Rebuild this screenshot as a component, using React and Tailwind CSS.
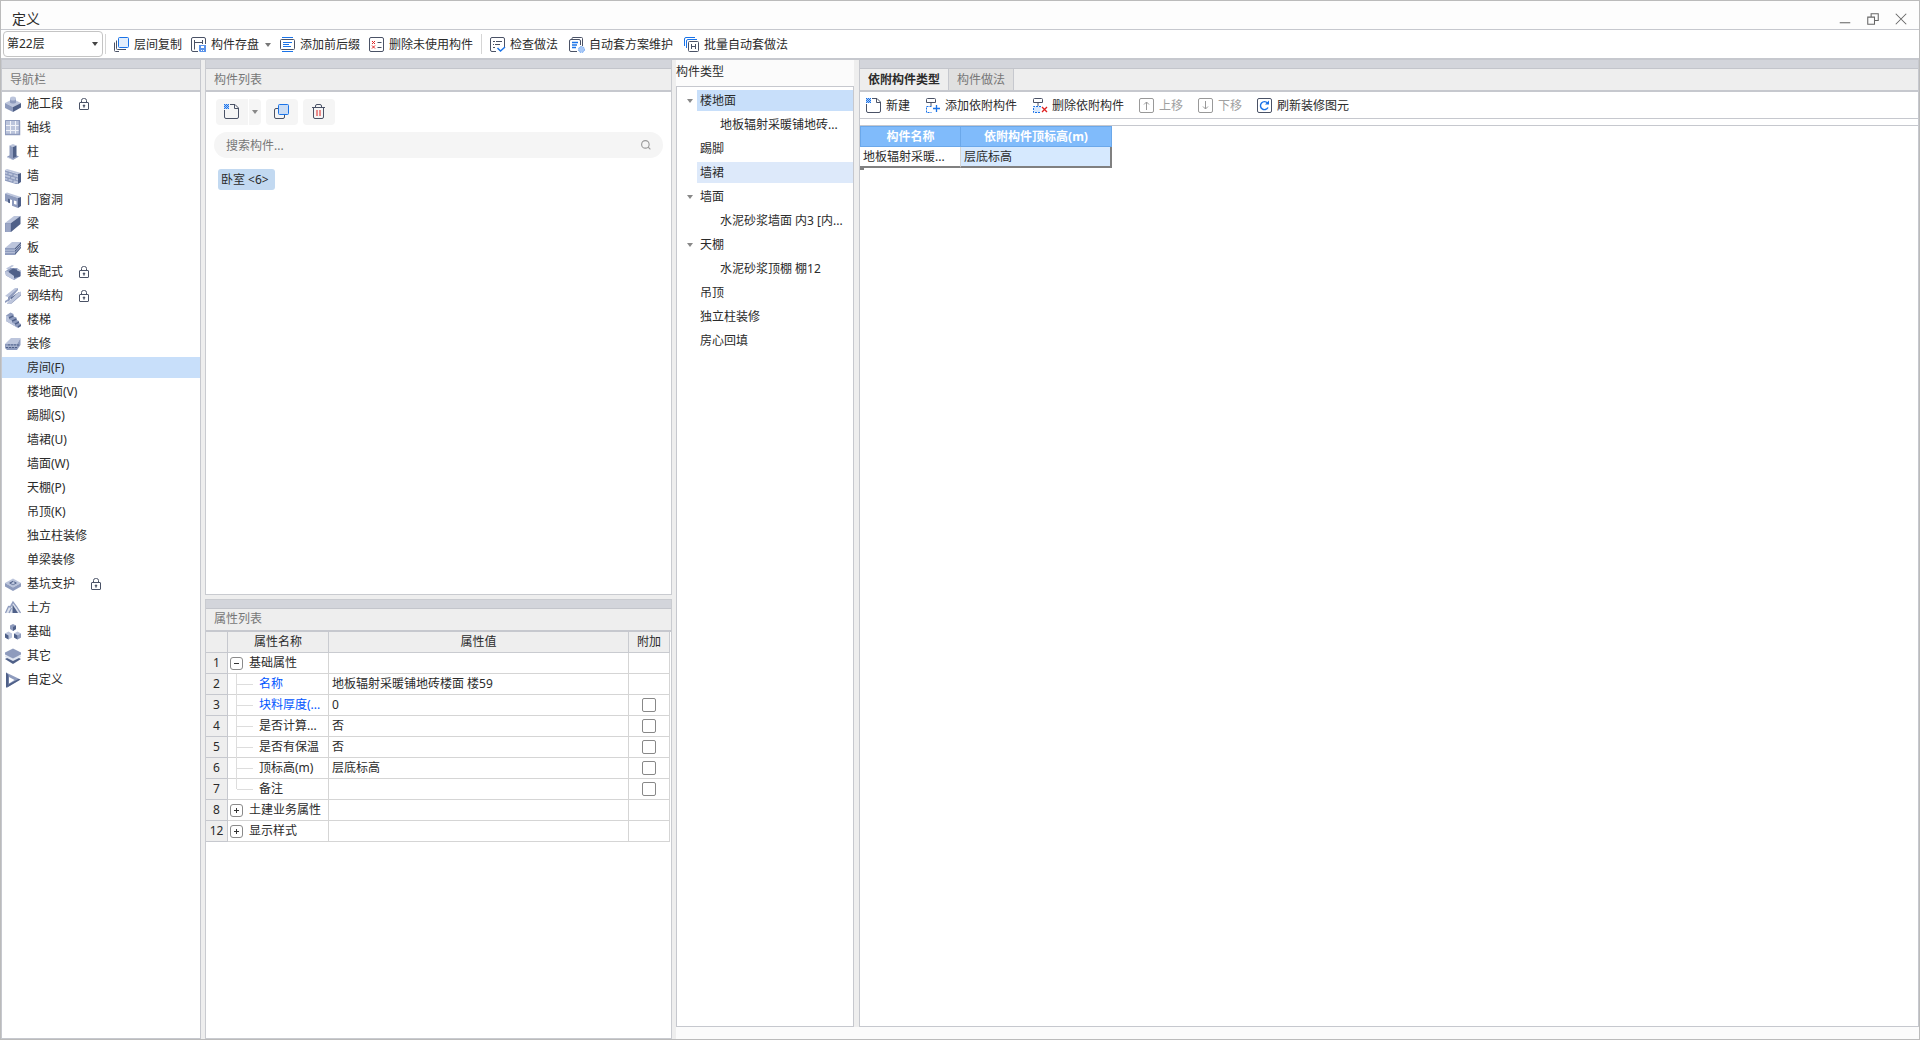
import { useState } from 'react';

// shades used by the 3D style icons
const L = '#bcc5dc';
const M = '#8e9bbd';
const D = '#4f6088';

const INK = '#4a5266';
const BLUE = '#1a73e8';
const RED = '#e02020';

function Icon({ children, className = 'size-4' }) {
  return (
    <svg viewBox="0 0 16 16" fill="none" className={`shrink-0 ${className}`} aria-hidden="true">
      {children}
    </svg>
  );
}

const navIcons = {
  stage: (
    <>
      <path d="M0 7 8 3l8 4-8 4z" fill={L} />
      <path d="M0 7 8 11v5L0 12z" fill={M} />
      <path d="M16 7 8 11v5l8-4.500z" fill={D} />
      <path d="M5 2.500v4c1 1.300 5 1.300 6 0v-4z" fill={M} />
      <ellipse cx="8" cy="2.500" rx="3" ry="2" fill={L} />
    </>
  ),
  grid: (
    <>
      <path d="M0 0h15v15H0z" fill={L} />
      <path d="M5.500 1v13M10.500 1v13M1 5.500h13M1 10.500h13" stroke="#f1f3f9" />
      <path d="M.5 15V.5H15" stroke={M} />
      <path d="M14.500 1v13.500H0" stroke={M} strokeWidth="1.500" />
    </>
  ),
  column: (
    <>
      <path d="M2 12.500 8 10l6 2.500L8 16z" fill={M} />
      <path d="M2 12.500 8 15.500V16l-6-2.500z" fill={L} />
      <path d="M4.500 1.500 8 0l3.500 1.500L8 3z" fill={L} />
      <path d="M4.500 1.500 8 3v11l-3.500-1.500z" fill={M} />
      <path d="M11.500 1.500 8 3v11l3.500-1.500z" fill={D} />
    </>
  ),
  wall: (
    <>
      <path d="M0 2 2 1l14 4-3 1z" fill={L} />
      <path d="M0 2l13 4v10L0 12z" fill={L} />
      <path d="M13 6l3-1v9l-3 2z" fill={D} />
      <path d="M0 3l13 4M0 6l13 4M0 9l13 4M0 12l13 4M3 4v3M8 5.500v3M5.500 8v3M10.500 9.500v3M3 10.500v2.500M8 12v3" stroke={M} strokeWidth="1.200" />
    </>
  ),
  opening: (
    <>
      <path d="M0 1.500 2 .5l14 4.500-3 1z" fill={L} />
      <path fillRule="evenodd" d="M0 1.500l13 4.500v10l-6-2.300V8L3 6.800V10L0 9zM9 8.500v3.500l2.500.8V9.300z" fill={M} />
      <path d="M3 6.500v4l2 .8V7.200z" fill={D} />
      <path d="M13 6l3-1v9l-3 2z" fill={D} />
    </>
  ),
  beam: (
    <>
      <path d="M0 7 9 0h6.500L6 7z" fill={L} />
      <path d="M0 7h6v9H0z" fill={M} />
      <path d="M2 7.500V16M4 7.500V16" stroke={L} strokeWidth=".6" />
      <path d="M6 7 15.500 0v8L6 16z" fill={D} />
    </>
  ),
  slab: (
    <>
      <path d="M0 8 7 2h9l-6 6z" fill={L} />
      <path d="M0 8h10v7H0z" fill={M} />
      <path d="M10 8l6-6v6l-6 7z" fill={D} />
      <path d="M0 10.200h10l6-6M0 12.600h10l6-6.500" stroke={L} strokeWidth=".9" />
    </>
  ),
  prefab: (
    <>
      <path d="M0 7.500 5 4h7l4 3v5l-7 4-8-4.500z" fill={M} />
      <path d="M4 7l4-2.500 7 2v6L9 14l-5-4z" fill={D} />
      <path d="M0 8l2-1 7 5v4l-8-4.500z" fill={L} />
      <path d="M1 4.500 7 1l2 .8L3 5.500z" fill={L} />
      <path d="M12 5l4 1.500V8l-4-1.500z" fill={L} />
    </>
  ),
  steel: (
    <>
      <path d="M0 8 10 0h3L3 9z" fill={L} />
      <path d="M3 9 13 0v2L8 8l-5 6z" fill={M} />
      <path d="M6 9.500 14 4v3l-8 7z" fill={D} />
      <path d="M2 15 13 4.500l3-1V6L5 16H2z" fill={L} />
      <path d="M5 16 16 6v1.500L6 16z" fill={M} />
      <path d="M0 13l5-3v2l-5 3z" fill={M} />
    </>
  ),
  stairs: (
    <>
      <path d="M1 3.500 5.500.5l3 1.500v2.500l3 1V8l2.500 1v2l2 1v2l-3 2L1 9z" fill={M} />
      <path d="M1 3.500l3 1.200v2.500l3 1.200v2.400l3 1.200v2l3 1.500V16L1 9z" fill={L} />
      <path d="M4 6l4.500-2.200M7 9.200 11.500 7M10 12.200l4-2M13 15l3-1.800" stroke={D} strokeWidth="1.500" />
    </>
  ),
  decorate: (
    <>
      <path d="M0 8 6 2h9.500L12 8z" fill={L} />
      <path d="M0 8h12v6H2l-2-2z" fill={M} />
      <path d="M12 8l3.500-6v7L12 14z" fill={M} />
      <path d="M3 9h11M1 11.500h12" stroke={D} strokeDasharray="2 1" />
      <path d="M1 10.200h11" stroke={L} strokeWidth=".8" />
    </>
  ),
  pit: (
    <>
      <path d="M0 7l8-4.500L16 7l-8 4.500z" fill={L} />
      <path d="M0 7l8 4.500V15L0 10.500z" fill={M} />
      <path d="M16 7l-8 4.500V15l8-4.500z" fill={M} />
      <path d="M4 7l4-2.300L12 7 8 9.200z" fill={D} />
      <path d="M6 7.200 9 5l.8 2.500L8 8.800z" fill={L} />
    </>
  ),
  earth: (
    <>
      <path d="M7.500 2 11 6l4 7H1l3-7z" fill={L} opacity=".5" />
      <path d="M.5 13 3.500 6.500l2 .5L8 2l3.500 4.500 4 6.500" stroke={M} strokeWidth="1.300" />
      <path d="M7.500 4.500l5.500 8.500H7.500z" fill={D} />
      <path d="M4 13l2.500-5" stroke={M} strokeWidth="1.300" />
    </>
  ),
  base: (
    <>
      <path d="M5 1.500 8 0l3 1.500V5L8 7 5 5z" fill={M} />
      <path d="M8 3l3-1.500V5L8 7z" fill={D} />
      <path d="M0 9.500l3.500-2L7 9.500v4l-3.500 2-3.500-2z" fill={L} />
      <path d="M0 9.500l3.500 2v4l-3.500-2z" fill={D} />
      <path d="M9 9.500l3.500-2 3.500 2v4l-3.500 2-3.500-2z" fill={L} />
      <path d="M12.500 11.500 16 9.500v4l-3.500 2z" fill={M} />
      <path d="M9 9.500l3.500 2v4l-3.500-2z" fill={D} />
    </>
  ),
  other: (
    <>
      <path d="M0 11l8-4 8 4-8 5z" fill={D} />
      <path d="M0 7.500h16V9l-8 4-8-4z" fill="#dfe5f1" />
      <path d="M0 4.500 8 .5l8 4v2L8 10.500 0 6.500z" fill={M} />
    </>
  ),
  custom: (
    <>
      <path d="M1 .5 15.500 7.500 2 15.500z" fill={M} />
      <path d="M4 5l5.500 3L4 11.500z" fill="#fff" />
      <path d="M1 .5 3.500 3v10L2 15.500H1z" fill={D} />
      <path d="M2 15.500 15.500 7.500l-2-.5L4 12z" fill={D} />
    </>
  ),
};

const navItems = [
  { name: '施工段', icon: 'stage', lock: true },
  { name: '轴线', icon: 'grid' },
  { name: '柱', icon: 'column' },
  { name: '墙', icon: 'wall' },
  { name: '门窗洞', icon: 'opening' },
  { name: '梁', icon: 'beam' },
  { name: '板', icon: 'slab' },
  { name: '装配式', icon: 'prefab', lock: true },
  { name: '钢结构', icon: 'steel', lock: true },
  { name: '楼梯', icon: 'stairs' },
  { name: '装修', icon: 'decorate' },
  { name: '房间(F)' },
  { name: '楼地面(V)' },
  { name: '踢脚(S)' },
  { name: '墙裙(U)' },
  { name: '墙面(W)' },
  { name: '天棚(P)' },
  { name: '吊顶(K)' },
  { name: '独立柱装修' },
  { name: '单梁装修' },
  { name: '基坑支护', icon: 'pit', lock: true },
  { name: '土方', icon: 'earth' },
  { name: '基础', icon: 'base' },
  { name: '其它', icon: 'other' },
  { name: '自定义', icon: 'custom' },
];

const typeTree = [
  { name: '楼地面', open: true },
  { name: '地板辐射采暖铺地砖...', child: true },
  { name: '踢脚' },
  { name: '墙裙', hover: true },
  { name: '墙面', open: true },
  { name: '水泥砂浆墙面 内3 [内...', child: true },
  { name: '天棚', open: true },
  { name: '水泥砂浆顶棚 棚12', child: true },
  { name: '吊顶' },
  { name: '独立柱装修' },
  { name: '房心回填' },
];

const props = [
  { no: 1, name: '基础属性', group: '-' },
  { no: 2, name: '名称', value: '地板辐射采暖铺地砖楼面 楼59', blue: true },
  { no: 3, name: '块料厚度(...', value: '0', blue: true, check: true },
  { no: 4, name: '是否计算...', value: '否', check: true },
  { no: 5, name: '是否有保温', value: '否', check: true },
  { no: 6, name: '顶标高(m)', value: '层底标高', check: true },
  { no: 7, name: '备注', value: '', check: true, last: true },
  { no: 8, name: '土建业务属性', group: '+' },
  { no: 12, name: '显示样式', group: '+' },
];

const toolIcons = {
  copyFloor: (
    <>
      <rect x="4.500" y=".5" width="10" height="10" rx="1" fill="#e3eefc" stroke={BLUE} />
      <path d="M2.500 3.500v8a1 1 0 0 0 1 1H12M.5 5.500v8a1 1 0 0 0 1 1H5" stroke={INK} />
    </>
  ),
  save: (
    <>
      <path d="M7 14.500H2A1.500 1.500 0 0 1 .5 13V2A1.500 1.500 0 0 1 2 .5h11A1.500 1.500 0 0 1 14.500 2v5" stroke={INK} />
      <path d="M3.500 3v9.500M3.500 5.500h8M11.500 3v4" stroke={INK} />
      <path d="M8 8h7v7H9l-1-1z" fill="#5b93ea" />
      <path d="M10 9h3v2h-3zM10 13h1v1h-1zM12 13h1v1h-1z" fill="#fff" />
    </>
  ),
  prefix: (
    <>
      <path d="M2 .5h11M2 14.500h11" stroke={BLUE} />
      <rect x=".5" y="2.500" width="14" height="10" rx="1" stroke={INK} />
      <path d="M3 5.500h9M3 7.500h6M3 9.500h8" stroke={BLUE} />
    </>
  ),
  removeUnused: (
    <>
      <rect x=".5" y=".5" width="14" height="14" rx="1.500" stroke={INK} />
      <path d="M3 4l3 3M6 4 3 7M3 8.500l3 3M6 8.500l-3 3" stroke={RED} />
      <path d="M8.500 5.500h4M8.500 10.500h4" stroke={INK} />
    </>
  ),
  check: (
    <>
      <path d="M6 14.500H2A1.500 1.500 0 0 1 .5 13V2A1.500 1.500 0 0 1 2 .5h11A1.500 1.500 0 0 1 14.500 2v8" stroke={INK} />
      <path d="M3 4.500h2M6 4.500h6M3 7.500h1M5 7.500h5M3 10.500h2" stroke={INK} />
      <path d="M7.500 11l3 3 4.500-4" stroke={BLUE} strokeWidth="1.500" />
    </>
  ),
  scheme: (
    <>
      <path d="M3 2V1.500a1 1 0 0 1 1-1h8.500a1 1 0 0 1 1 1V9" stroke={INK} />
      <path d="M8 14.500H2a1.500 1.500 0 0 1-1.500-1.500V4A1.500 1.500 0 0 1 2 2.500h8A1.500 1.500 0 0 1 11.500 4v4" stroke={INK} />
      <path d="M3 5.500h6M3 8h5M3 10.500h4" stroke={BLUE} strokeWidth="1.300" />
      <circle cx="12.500" cy="12.500" r="3" fill="#a9c9f7" stroke="#6ba3f0" strokeDasharray="1.500 1" />
    </>
  ),
  batch: (
    <>
      <path d="M.5 9V2A1.500 1.500 0 0 1 2 .5h9M2.500 11V4A1.500 1.500 0 0 1 4 2.500h9" stroke={BLUE} />
      <rect x="4.500" y="4.500" width="10" height="10" rx="1" stroke={INK} />
      <path d="M7.500 7v5M11.500 7v5M7.500 9.500h4" stroke={INK} />
    </>
  ),
  create: (
    <>
      <path d="M6 .5h5l3.500 3.500v9a1.500 1.500 0 0 1-1.500 1.500H2A1.500 1.500 0 0 1 .5 13V6" stroke={INK} />
      <path d="M10.500.5v4h4" stroke={INK} />
      <path d="M0 0h5v5H0z" fill="#a9c9f7" />
      <path d="M0 .5h5M0 2.500h5M0 4.500h5" stroke={BLUE} strokeDasharray="1 1" />
      <path d="M1 1.500h4M1 3.500h4" stroke={BLUE} strokeDasharray="1 1" />
    </>
  ),
  addDep: (
    <>
      <path d="M1.500 4.500v-3a1 1 0 0 1 1-1h7a1 1 0 0 1 1 1v3zM6 5v3" stroke={INK} />
      <path d="M6.500 8.500h-5v6h5" stroke={BLUE} strokeDasharray="2 1" />
      <path d="M11.500 7v7M8 10.500h7" stroke={BLUE} strokeWidth="1.300" />
    </>
  ),
  removeDep: (
    <>
      <path d="M1.500 4.500v-3a1 1 0 0 1 1-1h7a1 1 0 0 1 1 1v3zM6 5v3" stroke={INK} />
      <path d="M9 8.500H1.500v6H8" fill="#d9e8fc" stroke={BLUE} strokeDasharray="2 1" />
      <path d="M10 9l5 5M15 9l-5 5" stroke={RED} strokeWidth="1.300" />
    </>
  ),
  up: (
    <>
      <rect x=".5" y=".5" width="14" height="14" rx="1.500" stroke="#999" />
      <path d="M7.500 12V4M5 6.500 7.500 4 10 6.500" stroke="#999" />
    </>
  ),
  down: (
    <>
      <rect x=".5" y=".5" width="14" height="14" rx="1.500" stroke="#999" />
      <path d="M7.500 3v8M5 8.500 7.500 11 10 8.500" stroke="#999" />
    </>
  ),
  refresh: (
    <>
      <rect x=".5" y=".5" width="14" height="14" rx="1.500" stroke={INK} />
      <path d="M11 9.500A4 4 0 1 1 10.500 5" stroke={BLUE} strokeWidth="1.400" />
      <path d="M8 6.500h4v-4z" fill={BLUE} />
    </>
  ),
  copy: (
    <>
      <path d="M4 4.500H2A1.500 1.500 0 0 0 .5 6v7A1.500 1.500 0 0 0 2 14.500h7a1.500 1.500 0 0 0 1.500-1.500v-2" stroke={INK} />
      <rect x="4.500" y=".5" width="10" height="10" rx="1" fill="#c9dcf5" stroke={BLUE} />
    </>
  ),
  trash: (
    <>
      <path d="M1 3.500h13M4.500 3.500V2A1.500 1.500 0 0 1 6 .5h3A1.500 1.500 0 0 1 10.500 2v1.500M2.500 3.500V13A1.500 1.500 0 0 0 4 14.500h7a1.500 1.500 0 0 0 1.500-1.500V3.500" stroke={INK} />
      <path d="M6 6v6M9 6v6" stroke={RED} />
    </>
  ),
};

function Caret({ className = '' }) {
  return (
    <svg viewBox="0 0 6 4" className={`h-1 w-1.5 shrink-0 ${className}`} aria-hidden="true">
      <path d="M0 0h6L3 4z" fill="currentColor" />
    </svg>
  );
}

function Lock() {
  return (
    <svg viewBox="0 0 10 12" fill="none" className="ml-4 h-3 w-2.5 shrink-0" aria-hidden="true">
      <rect x=".5" y="4.500" width="9" height="7" rx=".5" stroke={INK} />
      <path d="M2.500 4.500V2.500a2 2 0 0 1 2-2h1a2 2 0 0 1 2 2v2" stroke={INK} />
      <path d="M5 6.200 6.500 7.700 5.500 8.700v1h-1v-1l-1-1z" fill={INK} />
    </svg>
  );
}

function Tool({ icon, label, caret, disabled }) {
  return (
    <button disabled={disabled} className={`flex shrink-0 items-center gap-1 whitespace-nowrap ${disabled ? 'text-[#a0a0a0]' : ''}`}>
      <Icon>{toolIcons[icon]}</Icon>
      {label}
      {caret && <Caret className="ml-0.5 text-[#777]" />}
    </button>
  );
}

// gray grip strip plus title row shared by the docked panels
function PanelHead({ children }) {
  return (
    <>
      <div className="h-[9px] shrink-0 border-b border-[#c3c5cb] bg-[#d3d5db]" />
      <div className="flex h-[23px] shrink-0 items-stretch border-b-2 border-[#c6c8ce] bg-[#eee]">{children}</div>
    </>
  );
}

function PropName({ row }) {
  if (row.group) {
    return (
      <div className="flex h-5 items-center gap-1.5 pl-0.5">
        <button aria-label={row.name} className="flex size-[13px] items-center justify-center rounded-[3px] border border-[#8a8a8a]">
          <svg viewBox="0 0 5 5" className="size-[5px]" aria-hidden="true">
            <path d={row.group === '+' ? 'M0 2.500h5M2.500 0v5' : 'M0 2.500h5'} stroke="#333" />
          </svg>
        </button>
        {row.name}
      </div>
    );
  }
  return (
    <div className="flex h-5 items-center pl-2">
      <span className={`w-px self-stretch bg-[#ddd] ${row.last ? 'mb-2.5' : '-mb-px'}`} />
      <span className="mr-1.5 h-px w-4 bg-[#ddd]" />
      <span className={row.blue ? 'text-[#0055ff]' : ''}>{row.name}</span>
    </div>
  );
}

export default function App() {
  const [active, setActive] = useState('房间(F)');
  const [selType, setSelType] = useState('楼地面');

  return (
    <div className="flex h-screen flex-col overflow-hidden border border-[#bbb] bg-[#eee] font-['Noto_Sans','Noto_Sans_CJK_SC',sans-serif] text-xs leading-5 text-[#2b2b2b]">
      {/* title bar */}
      <header className="flex h-7 shrink-0 items-end justify-between bg-[#fdfdfd] pr-3 pl-[11px]">
        <h1 className="text-sm leading-5">定义</h1>
        <div className="flex items-center gap-4 pb-1 text-[#666]">
          <button aria-label="最小化">
            <Icon className="size-3"><path d="M1 13h14" stroke="currentColor" strokeWidth="1.400" /></Icon>
          </button>
          <button aria-label="还原">
            <Icon className="size-3">
              <path d="M1 5.500h9V15H1zM5.500 5.500V1H15v9h-5" stroke="currentColor" strokeWidth="1.400" />
            </Icon>
          </button>
          <button aria-label="关闭">
            <Icon className="size-3"><path d="M1 1l14 14M15 1 1 15" stroke="currentColor" strokeWidth="1.400" /></Icon>
          </button>
        </div>
      </header>

      {/* main toolbar */}
      <div className="flex h-[31px] shrink-0 items-center border-t border-b-2 border-[#c6c8ce] bg-white">
        <div className="relative ml-0.5 w-[100px] shrink-0">
          <select aria-label="楼层" className="block h-[26px] w-full appearance-none rounded border border-[#c4c4c4] bg-white pl-[3px]">
            <option>第22层</option>
          </select>
          <Caret className="pointer-events-none absolute top-[11px] right-[5px] text-[#444]" />
        </div>
        <div className="ml-0.5 h-5 w-px bg-[#d5d5d5]" />
        <div className="ml-2 flex gap-[9px] pt-0.5">
          <Tool icon="copyFloor" label="层间复制" />
          <Tool icon="save" label="构件存盘" caret />
          <Tool icon="prefix" label="添加前后缀" />
          <Tool icon="removeUnused" label="删除未使用构件" />
        </div>
        <div className="ml-2 h-5 w-px bg-[#d5d5d5]" />
        <div className="ml-2 flex gap-[11px] pt-0.5">
          <Tool icon="check" label="检查做法" />
          <Tool icon="scheme" label="自动套方案维护" />
          <Tool icon="batch" label="批量自动套做法" />
        </div>
      </div>

      <div className="flex min-h-0 flex-1">
        {/* navigation */}
        <nav className="flex w-[200px] shrink-0 flex-col border-x border-b border-[#c6c8ce] bg-white">
          <PanelHead>
            <h2 className="pt-px pl-2 text-[#777]">导航栏</h2>
          </PanelHead>
          <ul className="flex flex-col gap-[3px] pt-px">
            {navItems.map(item => (
              <li key={item.name}>
                <button
                  className={`flex h-[21px] w-full items-center pl-[3px] ${active === item.name ? 'bg-[#c8dffa]' : ''}`}
                  onClick={() => setActive(item.name)}
                >
                  <span className="mr-1.5 size-4">{item.icon && <Icon>{navIcons[item.icon]}</Icon>}</span>
                  {item.name}
                  {item.lock && <Lock />}
                </button>
              </li>
            ))}
          </ul>
        </nav>

        {/* component list + properties */}
        <div className="ml-1 flex w-[467px] shrink-0 flex-col gap-1">
          <section className="flex min-h-0 flex-1 flex-col border-x border-b border-[#c9cbd0] bg-white">
            <PanelHead>
              <h2 className="pt-px pl-2 text-[#777]">构件列表</h2>
            </PanelHead>
            <div className="flex flex-col items-start px-2 pt-[7px]">
              <div className="ml-0.5 flex gap-[5px]">
                <div className="flex gap-px">
                  <button aria-label="新建构件" className="flex h-[26px] w-8 items-center justify-center rounded-l bg-[#f5f5f5]">
                    <Icon>{toolIcons.create}</Icon>
                  </button>
                  <button aria-label="新建选项" className="flex h-[26px] w-3 items-center justify-center rounded-r bg-[#f5f5f5] text-[#888]">
                    <Caret />
                  </button>
                </div>
                <button aria-label="复制" className="flex h-[26px] w-8 items-center justify-center rounded bg-[#f5f5f5]">
                  <Icon>{toolIcons.copy}</Icon>
                </button>
                <button aria-label="删除" className="flex h-[26px] w-8 items-center justify-center rounded bg-[#f5f5f5]">
                  <Icon>{toolIcons.trash}</Icon>
                </button>
              </div>
              <label className="mt-[7px] flex h-[26px] w-full items-center rounded-full bg-[#f5f5f5] px-3">
                <input type="text" aria-label="搜索构件" placeholder="搜索构件..." className="min-w-0 flex-1 bg-transparent pt-px outline-none placeholder:text-[#777]" />
                <Icon className="size-2.5">
                  <circle cx="7" cy="7" r="6" stroke="#999" strokeWidth="1.800" />
                  <path d="M11.500 11.500 15 15" stroke="#999" strokeWidth="1.800" />
                </Icon>
              </label>
              <button className="mt-[11px] ml-1 h-[21px] rounded-[3px] bg-[#c2d9f1] pr-1.5 pl-[3px] whitespace-nowrap">卧室 &lt;6&gt;</button>
            </div>
          </section>

          <section className="flex h-[440px] shrink-0 flex-col border border-[#c9cbd0] bg-white">
            <PanelHead>
              <h2 className="pl-2 text-[#777]">属性列表</h2>
            </PanelHead>
            <table className="mr-px table-fixed border-separate border-spacing-0">
              <colgroup>
                <col className="w-[22px]" />
                <col className="w-[101px]" />
                <col />
                <col className="w-[41px]" />
              </colgroup>
              <thead>
                <tr className="bg-[#eee]">
                  <th className="h-[21px] border-r border-b border-[#c6c8ce] p-0" />
                  <th className="border-r border-b border-[#c9cbd0] p-0 font-normal">属性名称</th>
                  <th className="border-r border-b border-[#c9cbd0] p-0 font-normal">属性值</th>
                  <th className="border-r border-b border-[#c9cbd0] p-0 font-normal">附加</th>
                </tr>
              </thead>
              <tbody>
                {props.map(row => (
                  <tr key={row.no}>
                    <td className="h-[21px] border-r border-b border-[#c6c8ce] bg-[#eee] p-0 text-center">{row.no}</td>
                    <td className="border-r border-b border-[#d5d5d5] p-0 whitespace-nowrap"><PropName row={row} /></td>
                    <td className="border-r border-b border-[#d5d5d5] p-0 pl-[3px]">{row.value}</td>
                    <td className="border-r border-b border-[#d5d5d5] p-0">
                      {row.check && (
                        <input type="checkbox" aria-label={`附加 ${row.name}`} className="mx-auto block size-3.5 appearance-none rounded-[2px] border border-[#888] bg-white checked:bg-[#1a73e8]" />
                      )}
                    </td>
                  </tr>
                ))}
              </tbody>
            </table>
          </section>
        </div>

        {/* component types */}
        <section className="ml-1 flex w-[178px] shrink-0 flex-col bg-[#fbfbfb] pb-3">
          <h2 className="h-[26px] pt-0.5">构件类型</h2>
          <ul className="flex flex-1 flex-col gap-[3px] border border-[#c6c8ce] bg-white pt-[3px]">
            {typeTree.map(node => (
              <li key={node.name} className="flex items-center">
                <span className="flex w-5 shrink-0 justify-end pr-1 text-[#888]">{node.open && <Caret />}</span>
                <button
                  className={`h-[21px] flex-1 text-left whitespace-nowrap ${node.child ? 'pl-[23px]' : 'pl-[3px]'} ${selType === node.name ? 'bg-[#c8dffa]' : node.hover ? 'bg-[#dde9fa]' : ''}`}
                  onClick={() => setSelType(node.name)}
                >
                  {node.name}
                </button>
              </li>
            ))}
          </ul>
        </section>

        {/* attached components */}
        <main className="flex min-w-0 flex-1 flex-col bg-[#fbfbfb] pb-3">
          <div className="flex flex-1 flex-col border-l-[5px] border-[#eee]">
            <div className="flex flex-1 flex-col border-x border-b border-[#c6c8ce] bg-white">
              <PanelHead>
                <button className="border-r border-[#c6c8ce] px-2 font-bold">依附构件类型</button>
                <button className="border-r border-[#c6c8ce] bg-[#e0e0e0] px-2 text-[#777]">构件做法</button>
              </PanelHead>
              <div className="flex h-[27px] shrink-0 items-center gap-[15px] border-b border-[#c6c8ce] pt-0.5 pl-1.5">
                <Tool icon="create" label="新建" />
                <Tool icon="addDep" label="添加依附构件" />
                <Tool icon="removeDep" label="删除依附构件" />
                <Tool icon="up" label="上移" disabled />
                <Tool icon="down" label="下移" disabled />
                <Tool icon="refresh" label="刷新装修图元" />
              </div>
              <div className="mt-1.5 border-t border-[#c6c8ce]">
                <table className="w-[252px] table-fixed border-separate border-spacing-0">
                  <thead>
                    <tr className="bg-[#80bbfb] text-white">
                      <th className="h-[21px] w-[101px] border border-[#6ba8ea] p-0 leading-[18px]">构件名称</th>
                      <th className="border-y border-r border-[#6ba8ea] p-0 leading-[18px]">依附构件顶标高(m)</th>
                    </tr>
                  </thead>
                  <tbody>
                    <tr>
                      <td className="h-[21px] border-r border-b-2 border-r-[#d5d5d5] border-b-[#808080] p-0 pl-[3px] leading-[18px] whitespace-nowrap">地板辐射采暖...</td>
                      <td className="border-r-2 border-b-2 border-[#808080] bg-[#d6e9fe] p-0 pl-[3px] leading-[18px]">层底标高</td>
                    </tr>
                  </tbody>
                </table>
                <div className="-mt-0.5 size-1 bg-[#808080]" />
              </div>
            </div>
          </div>
        </main>
      </div>
    </div>
  );
}
